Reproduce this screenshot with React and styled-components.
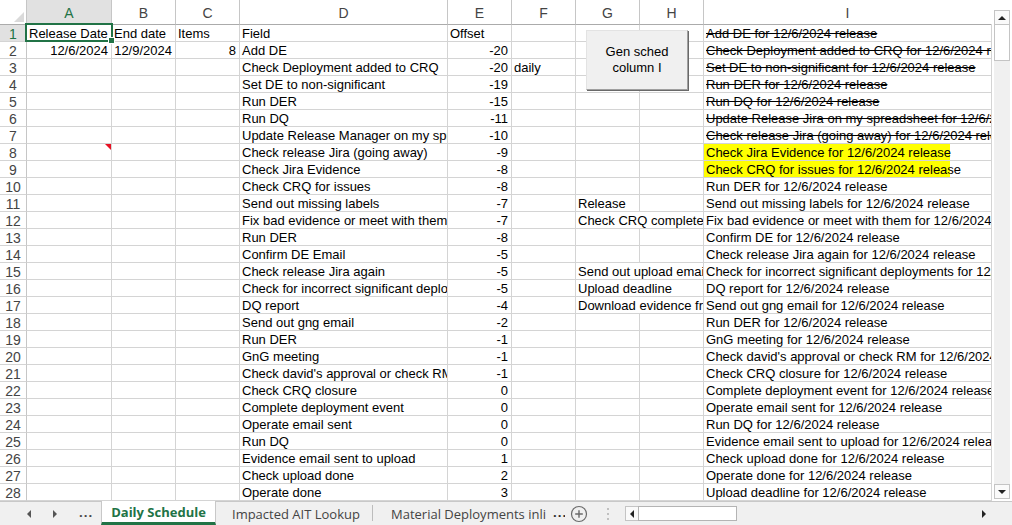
import React from "react";
import styled, { createGlobalStyle } from "styled-components";

const GlobalStyle = createGlobalStyle`
  html, body {
    margin: 0;
    padding: 0;
    background: #fff;
    overflow: hidden;
  }
`;

const GRID = "#d4d4d4";
const HEAD_LINE = "#c6c6c6";
const GREEN = "#217346";
const COLS = ["A", "B", "C", "D", "E", "F", "G", "H", "I"];
const WIDTHS = [27, 85, 64, 64, 208, 64, 64, 64, 64, 288];

const rows = [
  { A: "Release Date", B: "End date", C: "Items", D: "Field", E: "Offset", I: "Add DE for 12/6/2024 release", struck: true },
  { A: "12/6/2024", B: "12/9/2024", C: 8, D: "Add DE", E: -20, I: "Check Deployment added to CRQ for 12/6/2024 release", struck: true },
  { D: "Check Deployment added to CRQ", E: -20, F: "daily", I: "Set DE to non-significant for 12/6/2024 release", struck: true },
  { D: "Set DE to non-significant", E: -19, I: "Run DER for 12/6/2024 release", struck: true },
  { D: "Run DER", E: -15, I: "Run DQ for 12/6/2024 release", struck: true },
  { D: "Run DQ", E: -11, I: "Update Release Jira on my spreadsheet for 12/6/2024 release", struck: true },
  { D: "Update Release Manager on my spreadsheet", E: -10, I: "Check release Jira (going away) for 12/6/2024 release", struck: true },
  { D: "Check release Jira (going away)", E: -9, I: "Check Jira Evidence for 12/6/2024 release", marked: true, note: true },
  { D: "Check Jira Evidence", E: -8, I: "Check CRQ for issues for 12/6/2024 release", marked: true },
  { D: "Check CRQ for issues", E: -8, I: "Run DER for 12/6/2024 release" },
  { D: "Send out missing labels", E: -7, G: "Release", I: "Send out missing labels for 12/6/2024 release" },
  { D: "Fix bad evidence or meet with them", E: -7, G: "Check CRQ complete", I: "Fix bad evidence or meet with them for 12/6/2024 release" },
  { D: "Run DER", E: -8, I: "Confirm DE for 12/6/2024 release" },
  { D: "Confirm DE Email", E: -5, I: "Check release Jira again for 12/6/2024 release" },
  { D: "Check release Jira again", E: -5, G: "Send out upload email", I: "Check for incorrect significant deployments for 12/6/2024 release" },
  { D: "Check for incorrect significant deployments", E: -5, G: "Upload deadline", I: "DQ report for 12/6/2024 release" },
  { D: "DQ report", E: -4, G: "Download evidence from", I: "Send out gng email for 12/6/2024 release" },
  { D: "Send out gng email", E: -2, I: "Run DER for 12/6/2024 release" },
  { D: "Run DER", E: -1, I: "GnG meeting for 12/6/2024 release" },
  { D: "GnG meeting", E: -1, I: "Check david's approval or check RM for 12/6/2024 release" },
  { D: "Check david's approval or check RM", E: -1, I: "Check CRQ closure for 12/6/2024 release" },
  { D: "Check CRQ closure", E: 0, I: "Complete deployment event for 12/6/2024 release" },
  { D: "Complete deployment event", E: 0, I: "Operate email sent for 12/6/2024 release" },
  { D: "Operate email sent", E: 0, I: "Run DQ for 12/6/2024 release" },
  { D: "Run DQ", E: 0, I: "Evidence email sent to upload for 12/6/2024 release" },
  { D: "Evidence email sent to upload", E: 1, I: "Check upload done for 12/6/2024 release" },
  { D: "Check upload done", E: 2, I: "Operate done for 12/6/2024 release" },
  { D: "Operate done", E: 3, I: "Upload deadline for 12/6/2024 release" },
];

const isNumeric = (v) => typeof v === "number" || /^\d+\/\d+\/\d+$/.test(v);
// long text in G runs on over the empty H cell
const spills = (r) => r.G && r.G.length > 9;

const Window = styled.div`
  width: 1012px;
  height: 525px;
  display: flex;
  flex-direction: column;
  font-family: "Liberation Sans", Arial, sans-serif;
  background: #fff;
`;

const SheetArea = styled.div`
  display: flex;
  height: 501px;
`;

const Grid = styled.div`
  position: relative;
  display: grid;
  grid-template-columns: ${WIDTHS.map((w) => `${w}px`).join(" ")};
  grid-template-rows: 25px repeat(28, 17px);
  width: 992px;
  overflow: hidden;
`;

const Corner = styled.div`
  position: relative;
  box-sizing: border-box;
  border-right: 1px solid ${HEAD_LINE};
  border-bottom: 1px solid #ababab;

  &::after {
    content: "";
    position: absolute;
    right: 2px;
    bottom: 2px;
    width: 10px;
    height: 10px;
    background: #dadada;
    clip-path: polygon(100% 0, 100% 100%, 0 100%);
  }
`;

const ColHead = styled.div`
  box-sizing: border-box;
  border-right: 1px solid ${(p) => (p.$last ? "transparent" : HEAD_LINE)};
  border-bottom: 1px solid ${(p) => (p.$active ? GREEN : "#ababab")};
  background: ${(p) => (p.$active ? "#e1e1e1" : "#fff")};
  color: ${(p) => (p.$active ? GREEN : "#444")};
  font-size: 14px;
  line-height: 20px;
  padding-top: 3px;
  text-align: center;
`;

const RowHead = styled.div`
  box-sizing: border-box;
  border-right: 1px solid ${(p) => (p.$active ? GREEN : HEAD_LINE)};
  border-bottom: 1px solid ${GRID};
  background: ${(p) => (p.$active ? "#e1e1e1" : "#fff")};
  color: ${(p) => (p.$active ? GREEN : "#444")};
  font-size: 14px;
  line-height: 16px;
  padding-top: 1px;
  text-align: center;
  overflow: hidden;
`;

const Cell = styled.div`
  position: relative;
  box-sizing: border-box;
  grid-column: span ${(p) => p.$span || 1};
  border-right: 1px solid ${GRID};
  border-bottom: 1px solid ${GRID};
  padding: 1px 3px 0 2px;
  font-size: 13px;
  line-height: 16px;
  color: #000;
  white-space: nowrap;
  overflow: hidden;
  text-align: ${(p) => (p.$right ? "right" : "left")};
  text-decoration: ${(p) => (p.$strike ? "line-through" : "none")};
`;

const Marked = styled.span`
  display: block;
  width: 244px;
  margin: -1px 0 0 -2px;
  padding: 1px 0 1px 2px;
  background: #ffff00;
`;

const NoteFlag = styled.span`
  position: absolute;
  top: 0;
  right: 0;
  width: 0;
  height: 0;
  border-top: 6px solid #e81123;
  border-left: 6px solid transparent;
`;

const Selection = styled.div`
  position: absolute;
  left: 25px;
  top: 23px;
  width: 88px;
  height: 19px;
  box-sizing: border-box;
  border: 2px solid ${GREEN};
  pointer-events: none;

  &::after {
    content: "";
    position: absolute;
    right: -4px;
    bottom: -4px;
    width: 5px;
    height: 5px;
    background: ${GREEN};
    border: 1px solid #fff;
  }
`;

const MacroButton = styled.button`
  position: absolute;
  left: 586px;
  top: 30px;
  width: 102px;
  height: 60px;
  box-sizing: border-box;
  padding: 0;
  background: #f0f0f0;
  border: 1px solid;
  border-color: #e3e3e3 #a0a0a0 #a0a0a0 #e3e3e3;
  box-shadow: 1px 1px 0 #696969;
  font-family: "Liberation Sans", Arial, sans-serif;
  font-size: 13px;
  line-height: 16px;
  color: #000;
`;

const VScroll = styled.div`
  width: 20px;
  box-sizing: border-box;
  padding: 10px 2px 2px 2px;
  display: flex;
  flex-direction: column;
  background: #fff;
`;

const VTrack = styled.div`
  flex: 1;
  display: flex;
  flex-direction: column;
  background: #f0f0f0;
`;

const ArrowBox = styled.div`
  box-sizing: border-box;
  width: ${(p) => p.$w || 16}px;
  height: ${(p) => p.$h || 15}px;
  display: flex;
  align-items: center;
  justify-content: center;
  background: #fafafa;
  border: 1px solid #c4c4c4;
  flex-shrink: 0;
`;

const VThumb = styled.div`
  height: 37px;
  margin-top: -1px;
  box-sizing: border-box;
  background: #fff;
  border: 1px solid #c4c4c4;
`;

const Spacer = styled.div`
  flex: 1;
`;

const TabBar = styled.div`
  height: 24px;
  box-sizing: border-box;
  border-top: 1px solid #c8c8c8;
  display: flex;
  align-items: stretch;
  background: #f0f0f0;
  font-family: "Open Sans", "Noto Sans", sans-serif;
  font-size: 13px;
`;

const Nav = styled.div`
  width: 101px;
  display: flex;
  align-items: center;
  padding-left: 27px;
  gap: 22px;
  box-sizing: border-box;
  color: #555;
`;

const Ellipsis = styled.span`
  font-weight: 700;
  color: ${(p) => p.$tint || "#444"};
  letter-spacing: 1px;
  line-height: 1;
  padding-bottom: 3px;
`;

const ActiveTab = styled.div`
  width: 115px;
  box-sizing: border-box;
  margin-top: -1px;
  background: #fff;
  border-left: 1px solid #c8c8c8;
  border-right: 1px solid #c8c8c8;
  border-bottom: 3px solid ${GREEN};
  display: flex;
  align-items: center;
  justify-content: center;
  font-weight: 700;
  color: ${GREEN};
`;

const Tab = styled.div`
  width: ${(p) => p.$w}px;
  box-sizing: border-box;
  padding-left: ${(p) => p.$pad}px;
  display: flex;
  align-items: center;
  gap: 7px;
  color: #444;
  white-space: nowrap;
  overflow: hidden;
`;

const TabDivider = styled.div`
  width: 1px;
  margin: 3px 0 4px;
  background: #bcbcbc;
`;

const IconSlot = styled.div`
  width: ${(p) => p.$w}px;
  display: flex;
  align-items: center;
  justify-content: center;
`;

const HScroll = styled.div`
  width: 366px;
  margin-left: 2px;
  display: flex;
  align-items: center;
`;

const HThumb = styled.div`
  width: 99px;
  height: 15px;
  box-sizing: border-box;
  margin-left: -1px;
  background: #fff;
  border: 1px solid #b4b4b4;
`;

const Triangle = ({ dir, size = 4, color = "#222" }) => {
  const pts = {
    up: `0,${size} ${size},0 ${size * 2},${size}`,
    down: `0,0 ${size * 2},0 ${size},${size}`,
    left: `${size},0 ${size},${size * 2} 0,${size}`,
    right: `0,0 0,${size * 2} ${size},${size}`,
  }[dir];
  const vertical = dir === "up" || dir === "down";
  return (
    <svg width={vertical ? size * 2 : size} height={vertical ? size : size * 2}>
      <polygon points={pts} fill={color} />
    </svg>
  );
};

const AddSheetIcon = () => (
  <svg width="18" height="18" viewBox="0 0 18 18">
    <circle cx="9" cy="9" r="7.5" fill="none" stroke="#6a6a6a" strokeWidth="1.2" />
    <path d="M9 5.2v7.6M5.2 9h7.6" stroke="#6a6a6a" strokeWidth="1.4" />
  </svg>
);

const DotsIcon = () => (
  <svg width="4" height="14" viewBox="0 0 4 14">
    <circle cx="2" cy="2" r="1" fill="#b0b0b0" />
    <circle cx="2" cy="7" r="1" fill="#b0b0b0" />
    <circle cx="2" cy="12" r="1" fill="#b0b0b0" />
  </svg>
);

const renderCell = (r, n, col) => {
  const value = r[col];
  const key = `${col}${n}`;
  if (col === "I") {
    return (
      <Cell key={key} $strike={r.struck}>
        {r.marked ? <Marked>{value}</Marked> : value}
      </Cell>
    );
  }
  return (
    <Cell
      key={key}
      $span={col === "G" && spills(r) ? 2 : 1}
      $right={value !== undefined && isNumeric(value) && n !== 1}
    >
      {value}
      {col === "A" && r.note && <NoteFlag />}
    </Cell>
  );
};

export default function App() {
  return (
    <Window>
      <GlobalStyle />
      <SheetArea>
        <Grid>
          <Corner />
          {COLS.map((c, i) => (
            <ColHead key={c} $active={c === "A"} $last={i === COLS.length - 1}>
              {c}
            </ColHead>
          ))}
          {rows.map((r, i) => {
            const n = i + 1;
            return (
              <React.Fragment key={n}>
                <RowHead $active={n === 1}>{n}</RowHead>
                {COLS.filter((c) => !(c === "H" && spills(r))).map((c) => renderCell(r, n, c))}
              </React.Fragment>
            );
          })}
          <Selection />
          <MacroButton>
            Gen sched
            <br />
            column I
          </MacroButton>
        </Grid>
        <VScroll>
          <VTrack>
            <ArrowBox>
              <Triangle dir="up" />
            </ArrowBox>
            <VThumb />
            <Spacer />
            <ArrowBox>
              <Triangle dir="down" />
            </ArrowBox>
          </VTrack>
        </VScroll>
      </SheetArea>
      <TabBar>
        <Nav>
          <Triangle dir="left" size={4} color="#555" />
          <Triangle dir="right" size={4} color="#555" />
          <Ellipsis>...</Ellipsis>
        </Nav>
        <ActiveTab>Daily Schedule</ActiveTab>
        <Tab $w={156} $pad={16}>Impacted AIT Lookup</Tab>
        <TabDivider />
        <Tab $w={192} $pad={18}>
          Material Deployments inli
          <Ellipsis $tint="#2b2b2b">...</Ellipsis>
        </Tab>
        <IconSlot $w={28}>
          <AddSheetIcon />
        </IconSlot>
        <IconSlot $w={30}>
          <DotsIcon />
        </IconSlot>
        <HScroll>
          <ArrowBox $w={14} $h={15}>
            <Triangle dir="left" size={4} />
          </ArrowBox>
          <HThumb />
          <Spacer />
          <IconSlot $w={14}>
            <Triangle dir="right" size={4} />
          </IconSlot>
        </HScroll>
      </TabBar>
    </Window>
  );
}
